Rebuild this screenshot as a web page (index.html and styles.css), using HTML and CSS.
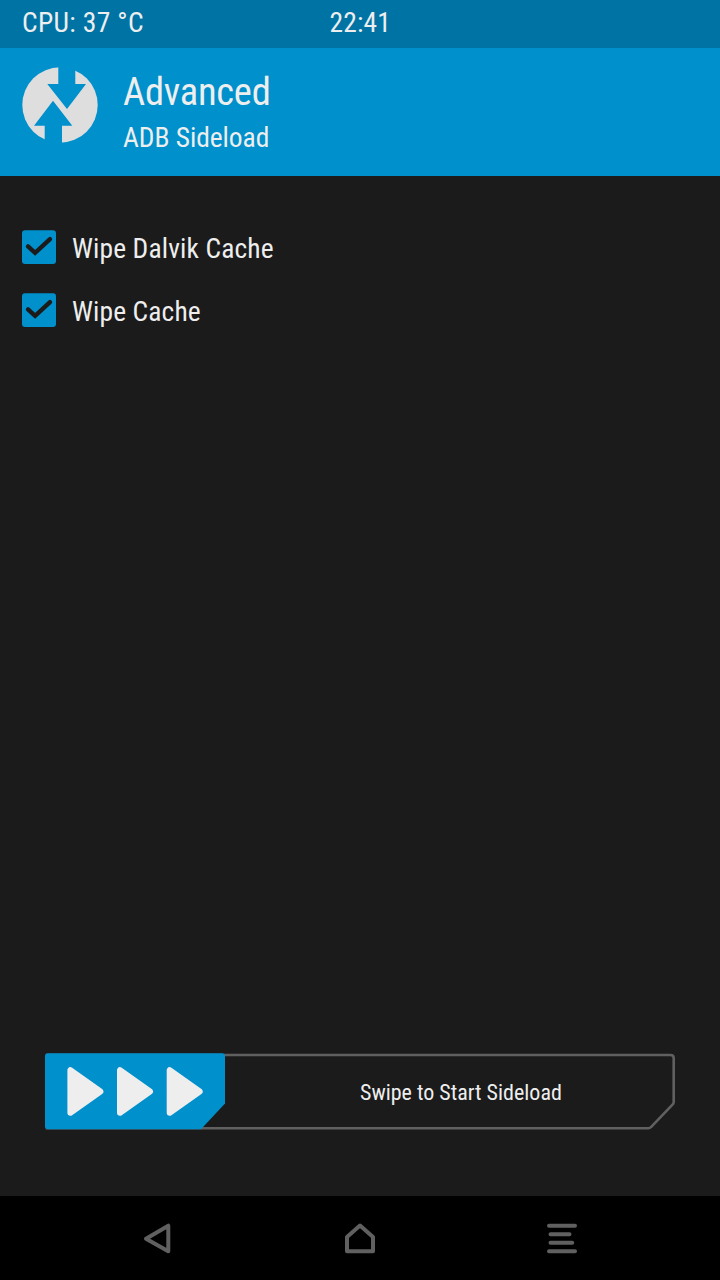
FILE: index.html
```html
<!DOCTYPE html>
<html lang="en">
<head>
<meta charset="utf-8">
<title>ADB Sideload</title>
<link rel="stylesheet" href="styles.css">
</head>
<body>
<div class="screen">
  <div class="status"><div class="cpu">CPU: 37 °C</div><div class="clock">22:41</div></div>
  <header class="header">
    <svg class="logo" width="76" height="76" viewBox="22 67 76 76">
      <circle cx="60" cy="105" r="37.7" fill="#dedede"/>
      <path fill="#0090cb" d="M58.3 66H75.3V84H86L67 109L47.3 84H58.3ZM53 100.7L72.3 125.7H62V144H44.7V125.7H34Z"/>
    </svg>
    <div class="titles">
      <h1 class="title">Advanced</h1>
      <h2 class="subtitle">ADB Sideload</h2>
    </div>
  </header>
  <main class="content">
    <div class="option">
      <svg class="check" width="34" height="34" viewBox="0 0 34 34"><rect y=".3" width="34" height="33.6" rx="3" fill="#0090cb"/><path d="M6 16.4L13.1 22.9L28 9.1" fill="none" stroke="#1b1b1b" stroke-width="4.3" stroke-linecap="round"/></svg>
      <div class="label">Wipe Dalvik Cache</div>
    </div>
    <div class="option">
      <svg class="check" width="34" height="34" viewBox="0 0 34 34"><rect y=".3" width="34" height="33.6" rx="3" fill="#0090cb"/><path d="M6 16.4L13.1 22.9L28 9.1" fill="none" stroke="#1b1b1b" stroke-width="4.3" stroke-linecap="round"/></svg>
      <div class="label">Wipe Cache</div>
    </div>
  </main>
  <div class="slider">
    <svg class="track" width="630" height="78" viewBox="0 0 630 78">
      <path d="M2 2H625.5Q628.7 2 628.7 5V49Q628.7 50.5 627.5 51.7L606 74Q605 75.2 603.5 75.2H2Z" fill="none" stroke="#606060" stroke-width="2.6"/>
      <path d="M3 .3H177Q180 .3 180 3.3V50.5L156 76.3H3Q0 76.3 0 73.3V3.3Q0 .3 3 .3Z" fill="#0090cb"/>
      <g fill="#eee" stroke="#eee" stroke-width="6" stroke-linejoin="round"><path d="M25.4 17.2V59.8L55.4 38.5Z"/><path d="M75 17.2V59.8L105 38.5Z"/><path d="M124.7 17.2V59.8L154.7 38.5Z"/></g>
    </svg>
    <div class="hint">Swipe to Start Sideload</div>
  </div>
  <nav class="nav">
    <svg width="36" height="36" viewBox="0 0 36 36"><path d="M28.3 5.7V31.3L6 18.7Z"/></svg>
    <svg width="36" height="36" viewBox="0 0 36 36"><path d="M5 17L18 5.5L31 17V31.3H5Z"/></svg>
    <svg width="36" height="36" viewBox="0 0 36 36"><path d="M5 5.7H31M6.5 14.2H25.5M6.5 22.8H28.2M5 31.3H31"/></svg>
  </nav>
</div>
</body>
</html>
```
FILE: styles.css
```css
* { box-sizing: border-box; }
body { margin: 0; background: #1b1b1b; color: #eee; font-family: "Roboto Condensed", Roboto, sans-serif; }
.screen { width: 720px; height: 1280px; display: flex; flex-direction: column; overflow: hidden; }
.status { height: 48px; background: #0073a5; display: grid; grid-template-columns: 329.5px 1fr; padding-top: 6px; font-size: 27.5px; line-height: 33px; }
.cpu { padding-left: 22px; letter-spacing: .35px; }
.clock { letter-spacing: .15px; }
.header { height: 128px; background: #0090cb; display: flex; padding: 19px 22px 0; }
.titles { padding-left: 25px; }
.title, .subtitle { margin: 0; font-weight: 400; white-space: nowrap; }
.title { font-size: 38.5px; line-height: 46px; padding-top: 2px; letter-spacing: -.25px; }
.subtitle { font-size: 27.5px; line-height: 34px; padding-top: 6px; letter-spacing: -.05px; }
.content { flex: 1; padding: 54px 22px 0; }
.option { display: flex; height: 63px; }
.label { padding-left: 16px; font-size: 27.5px; line-height: 38px; letter-spacing: .12px; }
.slider { height: 143px; padding-left: 45px; display: grid; grid-template-columns: 315px 1fr; }
.track { grid-area: 1 / 1 / 2 / 3; }
.hint { grid-area: 1 / 2; font-size: 22px; line-height: 80px; }
.nav { height: 84px; background: #000; display: flex; gap: 166px; padding: 24px 0 0 140px; }
.nav path { fill: none; stroke: #606060; stroke-width: 4; stroke-linejoin: round; stroke-linecap: round; }
```
